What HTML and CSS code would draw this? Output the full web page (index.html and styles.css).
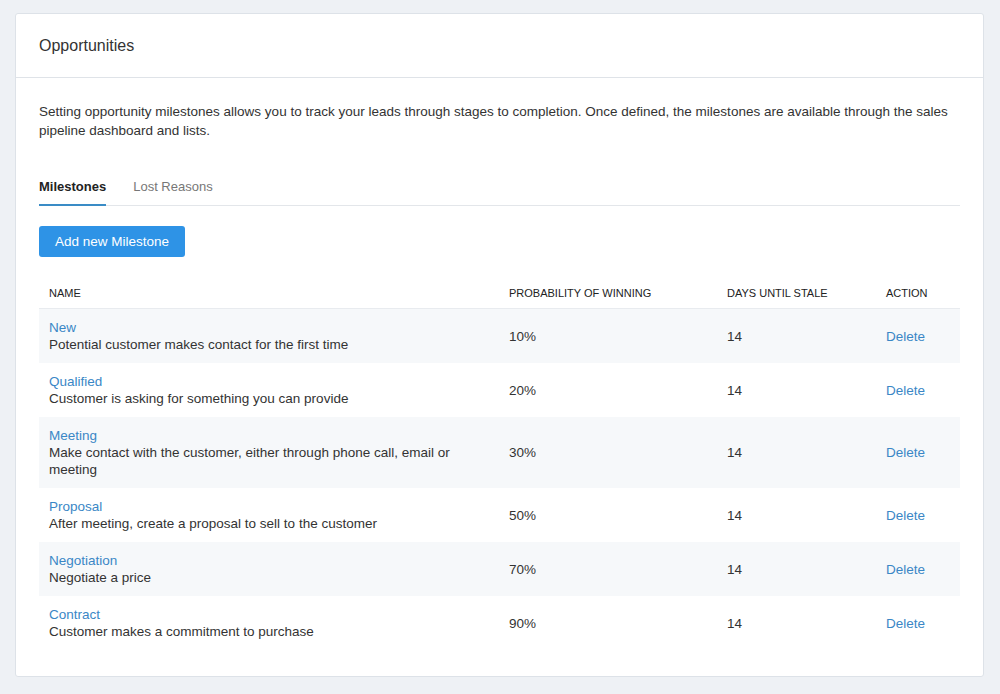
FILE: index.html
```html
<!DOCTYPE html>
<html>
<head>
<meta charset="utf-8">
<link rel="stylesheet" href="styles.css">
</head>
<body>
<div class="card">
  <div class="card-header">Opportunities</div>
  <div class="card-body">
    <p class="intro">Setting opportunity milestones allows you to track your leads through stages to completion. Once defined, the milestones are available through the sales pipeline dashboard and lists.</p>
    <div class="tabs">
      <span class="tab active">Milestones</span>
      <span class="tab">Lost Reasons</span>
    </div>
    <button class="btn">Add new Milestone</button>
    <table class="table">
      <colgroup>
        <col class="c-name"><col class="c-prob"><col class="c-days"><col class="c-act">
      </colgroup>
      <thead>
        <tr><th>NAME</th><th>PROBABILITY OF WINNING</th><th>DAYS UNTIL STALE</th><th>ACTION</th></tr>
      </thead>
      <tbody>
        <tr><td><a class="link">New</a><div>Potential customer makes contact for the first time</div></td><td>10%</td><td>14</td><td><a class="link">Delete</a></td></tr>
        <tr><td><a class="link">Qualified</a><div>Customer is asking for something you can provide</div></td><td>20%</td><td>14</td><td><a class="link">Delete</a></td></tr>
        <tr><td><a class="link">Meeting</a><div>Make contact with the customer, either through phone call, email or meeting</div></td><td>30%</td><td>14</td><td><a class="link">Delete</a></td></tr>
        <tr><td><a class="link">Proposal</a><div>After meeting, create a proposal to sell to the customer</div></td><td>50%</td><td>14</td><td><a class="link">Delete</a></td></tr>
        <tr><td><a class="link">Negotiation</a><div>Negotiate a price</div></td><td>70%</td><td>14</td><td><a class="link">Delete</a></td></tr>
        <tr><td><a class="link">Contract</a><div>Customer makes a commitment to purchase</div></td><td>90%</td><td>14</td><td><a class="link">Delete</a></td></tr>
      </tbody>
    </table>
  </div>
</div>
</body>
</html>
```
FILE: styles.css
```css
html, body {
  margin: 0;
  background: #eef1f5;
}
body {
  padding: 13px 16px 0 15px;
  font-family: "Liberation Sans", Arial, sans-serif;
  font-size: 13.5px;
  color: #333;
}
.card {
  background: #fff;
  border: 1px solid #dde2e8;
  border-radius: 3px;
  height: 664px;
  box-sizing: border-box;
}
.card-header {
  height: 63px;
  display: flex;
  align-items: center;
  padding: 0 23px;
  font-size: 16px;
  color: #333;
  border-bottom: 1px solid #dfe3e8;
}
.card-body {
  padding: 24px 23px 0 23px;
}
.intro {
  margin: 0;
  line-height: 19px;
}
.tabs {
  margin-top: 37px;
  border-bottom: 1px solid #e3e6ea;
  display: flex;
  gap: 27px;
}
.tab {
  font-size: 13px;
  line-height: 19px;
  padding-bottom: 8px;
  color: #777;
  border-bottom: 2px solid transparent;
  margin-bottom: -1px;
}
.tab.active {
  color: #222;
  font-weight: bold;
  border-bottom-color: #3a8cc6;
}
.btn {
  display: block;
  margin-top: 20px;
  width: 146px;
  height: 31px;
  border: 0;
  border-radius: 3px;
  background: #2e93e6;
  color: #fff;
  font-family: inherit;
  font-size: 13.5px;
  padding: 0;
}
.table {
  margin-top: 16px;
  width: 921px;
  border-collapse: collapse;
  table-layout: fixed;
}
.c-name { width: 460px; }
.c-prob { width: 218px; }
.c-days { width: 159px; }
.c-act { width: 84px; }
th {
  text-align: left;
  font-size: 11px;
  font-weight: normal;
  color: #222;
  line-height: 11px;
  padding: 15px 10px 9px 10px;
  border-bottom: 1px solid #e8ebef;
}
td {
  padding: 10px 10px;
  line-height: 17px;
  vertical-align: middle;
}
tbody tr:nth-child(odd) td {
  background: #f6f8fa;
}
.link {
  color: #3a87c6;
}
```
